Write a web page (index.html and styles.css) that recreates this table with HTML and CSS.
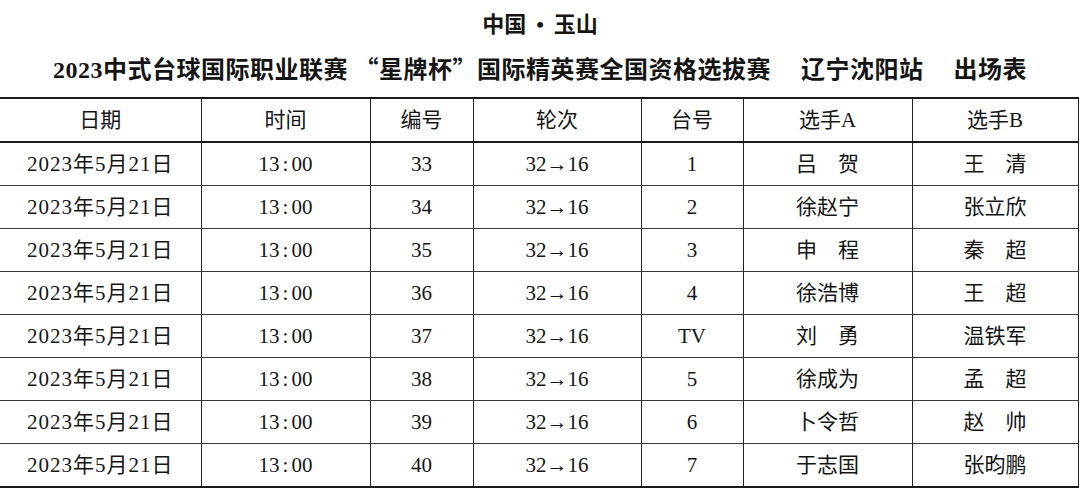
FILE: index.html
```html
<!DOCTYPE html>
<html lang="zh-CN">
<head>
<meta charset="utf-8">
<title>出场表</title>
<link rel="stylesheet" href="styles.css">
</head>
<body>
<header class="heading">
  <div class="title1">中国<span class="dot">•</span>玉山</div>
  <div class="title2">2023中式台球国际职业联赛 <span class="q">“</span>星牌杯<span class="q">”</span>国际精英赛全国资格选拔赛<span class="gap"></span>辽宁沈阳站<span class="gap"></span>出场表</div>
</header>
<table class="sheet">
  <colgroup>
    <col class="c1"><col class="c2"><col class="c3"><col class="c4"><col class="c5"><col class="c6"><col class="c7">
  </colgroup>
  <thead>
    <tr><th>日期</th><th>时间</th><th>编号</th><th>轮次</th><th>台号</th><th>选手A</th><th>选手B</th></tr>
  </thead>
  <tbody>
    <tr><td><span class="date">2023年5月21日</span></td><td>13<span class="colon">:</span>00</td><td>33</td><td>32→16</td><td>1</td><td>吕　贺</td><td>王　清</td></tr>
    <tr><td><span class="date">2023年5月21日</span></td><td>13<span class="colon">:</span>00</td><td>34</td><td>32→16</td><td>2</td><td>徐赵宁</td><td>张立欣</td></tr>
    <tr><td><span class="date">2023年5月21日</span></td><td>13<span class="colon">:</span>00</td><td>35</td><td>32→16</td><td>3</td><td>申　程</td><td>秦　超</td></tr>
    <tr><td><span class="date">2023年5月21日</span></td><td>13<span class="colon">:</span>00</td><td>36</td><td>32→16</td><td>4</td><td>徐浩博</td><td>王　超</td></tr>
    <tr><td><span class="date">2023年5月21日</span></td><td>13<span class="colon">:</span>00</td><td>37</td><td>32→16</td><td>TV</td><td>刘　勇</td><td>温铁军</td></tr>
    <tr><td><span class="date">2023年5月21日</span></td><td>13<span class="colon">:</span>00</td><td>38</td><td>32→16</td><td>5</td><td>徐成为</td><td>孟　超</td></tr>
    <tr><td><span class="date">2023年5月21日</span></td><td>13<span class="colon">:</span>00</td><td>39</td><td>32→16</td><td>6</td><td>卜令哲</td><td>赵　帅</td></tr>
    <tr><td><span class="date">2023年5月21日</span></td><td>13<span class="colon">:</span>00</td><td>40</td><td>32→16</td><td>7</td><td>于志国</td><td>张昀鹏</td></tr>
  </tbody>
</table>
</body>
</html>
```
FILE: styles.css
```css
html, body {
  margin: 0;
  padding: 0;
  background: #ffffff;
}
body {
  width: 1080px;
  height: 490px;
  overflow: hidden;
  color: #151515;
  font-family: "Liberation Serif", "Noto Sans CJK SC", serif;
}
.heading {
  text-align: center;
  font-weight: bold;
}
.title1 {
  margin-top: 13px;
  height: 24px;
  line-height: 24px;
  font-size: 22px;
}
.title1 .dot {
  display: inline-block;
  margin: 0 10px;
  font-size: 22px;
}
.title2 {
  margin-top: 16px;
  height: 30px;
  line-height: 30px;
  font-size: 24px;
  letter-spacing: 0.5px;
}
.title2 .q {
  font-family: "Noto Sans CJK SC", sans-serif;
}
.title2 .gap {
  display: inline-block;
  width: 30px;
}
.sheet {
  margin-top: 14px;
  width: 1078px;
  border-collapse: collapse;
  table-layout: fixed;
  font-size: 21px;
}
.c1 { width: 201px; }
.c2 { width: 169px; }
.c3 { width: 103px; }
.c4 { width: 168px; }
.c5 { width: 102px; }
.c6 { width: 169px; }
.c7 { width: 166px; }
.sheet th,
.sheet td {
  padding: 0;
  text-align: center;
  vertical-align: middle;
  font-weight: normal;
  border-left: 1px solid #222;
  border-right: 1px solid #222;
  border-bottom: 1px solid #3a3a3a;
  line-height: 24px;
}
.sheet th:first-child,
.sheet td:first-child {
  border-left: none;
}
.sheet th {
  height: 42px;
  border-top: 2px solid #1a1a1a;
  border-bottom: 2px solid #1a1a1a;
}
.sheet td {
  height: 42px;
}
.sheet tbody tr:last-child td {
  border-bottom: 2px solid #1a1a1a;
}
.date {
  letter-spacing: 1px;
}
.colon {
  margin: 0 3px;
}
```
